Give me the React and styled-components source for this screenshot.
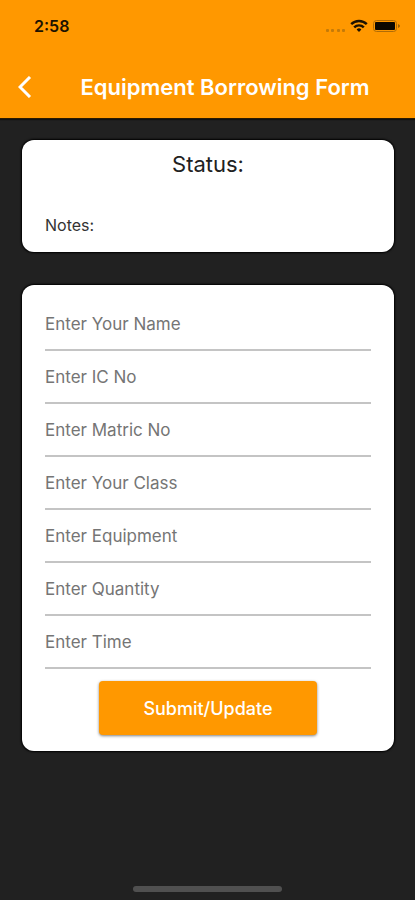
import styled, { createGlobalStyle } from "styled-components"

const fields = [
    { id: "name", label: "Enter Your Name" },
    { id: "ic", label: "Enter IC No" },
    { id: "matric", label: "Enter Matric No" },
    { id: "class", label: "Enter Your Class" },
    { id: "equipment", label: "Enter Equipment" },
    { id: "quantity", label: "Enter Quantity" },
    { id: "time", label: "Enter Time" },
]

let StatusIcons = ()=>{
    return(
        <svg width="74" height="14" viewBox="0 0 74 14" aria-hidden="true">
            <g fill="#c47a08">
                <rect x="0" y="10" width="3" height="3" rx="1" />
                <rect x="5" y="10" width="3" height="3" rx="1" />
                <rect x="11" y="10" width="3" height="3" rx="1" />
                <rect x="16" y="10" width="3" height="3" rx="1" />
            </g>
            <g fill="none" stroke="#1c1200" strokeWidth="2.4">
                <path d="M25.2 5.2a11 11 0 0 1 15.6 0" />
                <path d="M28.2 8.4a6.6 6.6 0 0 1 9.600 0" />
            </g>
            <path d="M30.6 10.4a3.4 3.4 0 0 1 4.8 0L33 13z" fill="#1c1200" />
            <rect x="47.5" y="1.5" width="23" height="11" rx="3" fill="none" stroke="#b06c06" />
            <rect x="49" y="3" width="20" height="8" rx="1" fill="#0c0800" />
            <path d="M72 5v4c1.4-.6 2-1.2 2-2s-.6-1.4-2-2z" fill="#a06205" />
        </svg>
    )
}

let App = ()=>{
    return(
        <>
            <GlobalStyle />
            <Screen>
                <Header>
                    <StatusBar>
                        <span>2:58</span>
                        <StatusIcons />
                    </StatusBar>
                    <NavBar>
                        <BackButton type="button" aria-label="Back">
                            <svg width="14" height="22" viewBox="0 0 14 22" fill="none" stroke="#fff" strokeWidth="3">
                                <path d="M12 1L2 11l10 10" />
                            </svg>
                        </BackButton>
                        <Title>Equipment Borrowing Form</Title>
                    </NavBar>
                </Header>

                <Content>
                    <StatusCard>
                        <StatusTitle>Status:</StatusTitle>
                        <Notes>Notes:</Notes>
                    </StatusCard>

                    <FormCard onSubmit={(e)=> e.preventDefault()}>
                        {fields.map((field)=>(
                            <Field
                                key={field.id}
                                name={field.id}
                                type="text"
                                placeholder={field.label}
                                aria-label={field.label}
                            />
                        ))}
                        <SubmitButton type="submit">Submit/Update</SubmitButton>
                    </FormCard>
                </Content>

                <HomeIndicator />
            </Screen>
        </>
    )
}

const GlobalStyle = createGlobalStyle`
    *{
        box-sizing: border-box;
    }

    body{
        margin: 0;
        background-color: #212121;
        font-family: Inter, "Liberation Sans", sans-serif;
    }
`

const Screen = styled.div`
    display: flex;
    flex-direction: column;
    min-height: 100vh;
    background-color: #212121;
`

const Header = styled.header`
    background-color: #ff9800;
    border-bottom: 1px solid #2b1a00;
    box-shadow: 0 1px 1px #111;
`

const StatusBar = styled.div`
    display: flex;
    align-items: center;
    justify-content: space-between;
    height: 52px;
    padding: 0 15px 0 34px;
    color: #1c1200;
    font-size: 16px;
    font-weight: 600;
`

const NavBar = styled.div`
    display: flex;
    align-items: center;
    height: 66px;
    padding: 4px 16px 0 16px;
`

const BackButton = styled.button`
    display: flex;
    align-items: center;
    width: 32px;
    height: 44px;
    padding: 0 2px;
    border: none;
    background: none;
    cursor: pointer;
`

const Title = styled.h1`
    flex: 1;
    margin: 0;
    padding-left: 3px;
    color: #fff;
    font-size: 22px;
    font-weight: 600;
    text-align: center;
    white-space: nowrap;
`

const Content = styled.main`
    display: flex;
    flex: 1;
    flex-direction: column;
    gap: 33px;
    padding: 21px 21px 32px 22px;
`

const StatusCard = styled.section`
    padding: 10px 23px 17px;
    border-radius: 12px;
    background-color: #fff;
    box-shadow: 0 0 2px 1px #000;
`

const StatusTitle = styled.h2`
    margin: 0 0 37px;
    color: #212121;
    font-size: 22px;
    font-weight: 400;
    line-height: 28px;
    text-align: center;
`

const Notes = styled.p`
    margin: 0;
    color: #333;
    font-size: 16px;
    line-height: 20px;
`

const FormCard = styled.form`
    display: flex;
    flex-direction: column;
    padding: 13px 23px 16px;
    border-radius: 12px;
    background-color: #fff;
    box-shadow: 0 0 2px 1px #000;
`

const Field = styled.input`
    width: 100%;
    height: 53px;
    padding: 0;
    border: none;
    border-bottom: 2px solid #c4c4c4;
    border-radius: 0;
    outline: none;
    background: none;
    color: #212121;
    font-family: inherit;
    font-size: 17px;

    &::placeholder{
        color: #757575;
        opacity: 1;
    }
`

const SubmitButton = styled.button`
    align-self: center;
    width: 67%;
    height: 54px;
    margin-top: 12px;
    border: none;
    border-radius: 4px;
    background-color: #ff9800;
    box-shadow: 0 1px 3px rgba(0, 0, 0, 0.5);
    color: #fff;
    font-family: inherit;
    font-size: 18px;
    font-weight: 500;
    cursor: pointer;
`

const HomeIndicator = styled.div`
    align-self: center;
    width: 36%;
    height: 6px;
    margin-bottom: 8px;
    border-radius: 3px;
    background-color: #505050;
`

export default App
